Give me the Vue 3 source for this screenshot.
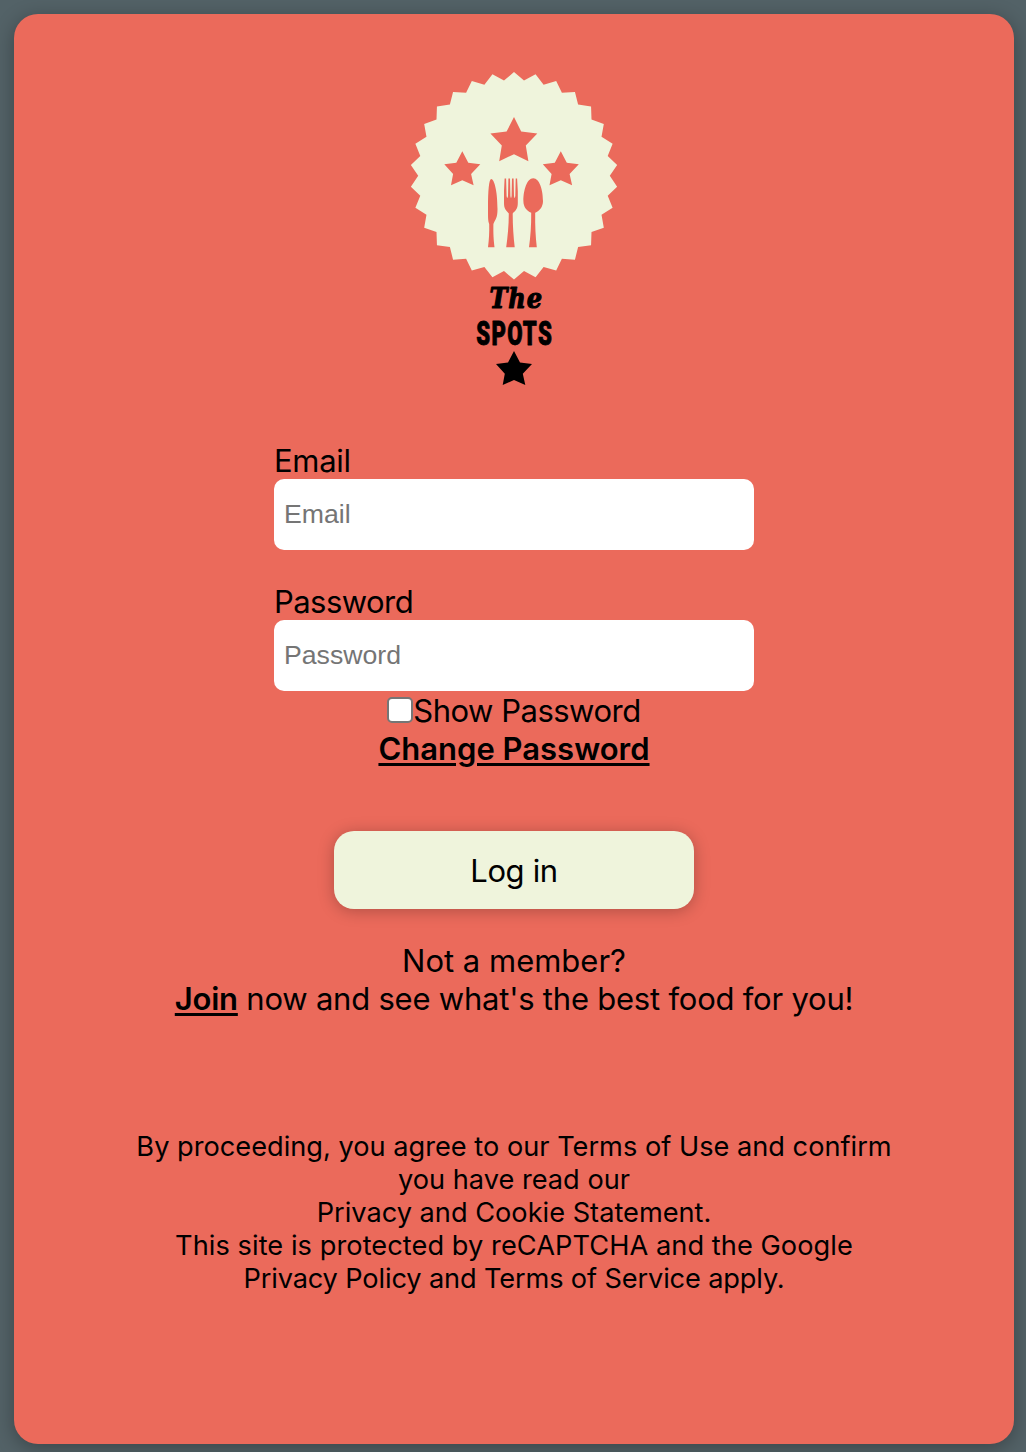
<script setup>
import { ref } from 'vue'

const email = ref('')
const password = ref('')
const showPassword = ref(false)

// 30-tooth badge outline
const badge = Array.from({ length: 60 }, (_, i) => {
  const r = i % 2 ? 95.8 : 103.7
  const a = (i * 6 - 90) * Math.PI / 180
  return `${(104 + r * Math.cos(a)).toFixed(2)},${(103.8 + r * Math.sin(a)).toFixed(2)}`
}).join(' ')
</script>

<template>
  <div class="page">
    <main class="card">
      <svg class="logo" width="208" height="316" viewBox="0 0 208 316" role="img" aria-label="The Spots">
        <defs>
          <path id="star" d="M0 0 6 11.5 18 13 8.8 22.8 11.3 34 0 29 -11.3 34 -9.2 22.8 -18 13 -6 11.5Z" />
        </defs>
        <polygon class="cream" :points="badge" />
        <g class="coral">
          <path d="M104 45 111.2 59.6 127.3 61.5 115.8 73.4 118.4 89.2 104 82.2 89.2 89.2 91.8 73.4 80.4 61.5 96.6 59.6Z" />
          <use href="#star" x="52.3" y="79.3" />
          <use href="#star" x="150.8" y="79.3" />
          <path d="M81.3 107C84 107 87.5 118 87.5 137C87.5 146 85.5 147 83.4 152C83.2 162 83.6 167 84.5 175.2H78C79 167 79.4 161 79.2 152C78 149 78 146 78 137C78 118 79 107 81.3 107Z" />
          <path d="M94.6 106.4H96.1L96.6 124Q97.2 128 98 124L98.4 106.4H100L100.4 124Q101 128 101.6 124L102 106.4H103.6L104 124Q104.6 128 105.3 124L105.7 106.4H107.1L107.8 119V131C107.8 137 105.5 138.5 102.7 141.4C102.7 154 103.5 165 104.7 175.2H96.2C97.6 165 98.8 154 98.8 141.4C96 138 94 137 94 131V119Z" />
          <path d="M123.2 106.2C129.5 106.2 133 118 133 129C133 135 129.5 139 125.2 140.8C125 154 125.6 165 126.8 175.2H119C120.5 165 121.3 154 121.2 140.8C116.8 139 113.4 135 113.4 129C113.4 118 117 106.2 123.2 106.2Z" />
        </g>
        <text class="script" x="79.5" y="235.6" textLength="53.5" lengthAdjust="spacingAndGlyphs">The</text>
        <text class="block" x="66.2" y="272.6" textLength="77" lengthAdjust="spacingAndGlyphs">SPOTS</text>
        <use href="#star" x="104" y="279" />
      </svg>

      <form class="form" @submit.prevent>
        <div class="field">
          <label class="l-email" for="email">Email</label>
          <input id="email" v-model="email" type="email" placeholder="Email">
        </div>
        <div class="field">
          <label class="l-pass" for="password">Password</label>
          <input id="password" v-model="password" :type="showPassword ? 'text' : 'password'" placeholder="Password">
        </div>
        <label class="show"><input v-model="showPassword" type="checkbox"><span>Show Password</span></label>
        <a class="change">Change Password</a>
        <button type="submit">Log in</button>
      </form>

      <p class="join"><span>Not a member?</span><span class="invite"><a>Join</a> now and see what's the best food for you!</span></p>
      <p class="legal">
        <span>By proceeding, you agree to our Terms of Use and confirm</span>
        <span>you have read our</span>
        <span>Privacy and Cookie Statement.</span>
        <span class="captcha">This site is protected by reCAPTCHA and the Google</span>
        <span class="policy">Privacy Policy and Terms of Service apply.</span>
      </p>
    </main>
  </div>
</template>

<style>
body { background: #536267; }
</style>

<style scoped>
* { box-sizing: border-box; }
.page {
  height: 1452px;
  padding: 14px 12px 8px 14px;
  overflow: hidden;
  background: #536267;
  color: #000;
  font: 31px/38px Inter, sans-serif;
}
.card {
  display: flex;
  flex-direction: column;
  align-items: center;
  height: 1430px;
  padding-top: 58px;
  border-radius: 24px;
  background: #eb6a5b;
  box-shadow: 0 4px 20px rgba(0, 0, 0, .3);
}
.logo { display: block; }
.cream { fill: #eff4dc; }
.coral { fill: #eb6a5b; }
.script {
  font: italic 700 27px "DejaVu Serif", serif;
  letter-spacing: 1px;
  stroke: #000;
  stroke-width: 1.1px;
  stroke-linejoin: round;
}
.block {
  font: 900 34px Roboto, sans-serif;
  letter-spacing: 2px;
  stroke: #000;
  stroke-width: .9px;
  stroke-linejoin: round;
}
.form {
  display: flex;
  flex-direction: column;
  align-items: center;
  margin-top: 53px;
}
.field {
  display: flex;
  flex-direction: column;
  align-items: flex-start;
  width: 480px;
}
.field + .field { margin-top: 32px; }
.field label { height: 38px; padding-top: 1px; }
.l-email { letter-spacing: -.3px; }
.l-pass { letter-spacing: -.55px; }
.field input {
  width: 480px;
  height: 71px;
  padding: 0 10px;
  border: 0;
  border-radius: 10px;
  background: #fff;
  font: 26.67px "Liberation Sans", Arial, sans-serif;
}
.field input::placeholder { color: #757575; opacity: 1; }
.show { display: flex; align-items: flex-start; height: 39px; padding-top: 1px; letter-spacing: -.5px; }
.show input {
  appearance: none;
  width: 26px;
  height: 26px;
  margin: 5px 0 0;
  border: 2px solid #767676;
  border-radius: 5px;
  background: #fff;
}
.change, .join a {
  font-weight: 600;
  text-decoration: underline;
  text-decoration-thickness: 3px;
  text-underline-offset: 3px;
}
button {
  width: 360px;
  height: 78px;
  margin-top: 63px;
  padding: 2px 0 0;
  border: 0;
  border-radius: 20px;
  background: #eff4dc;
  color: #000;
  font: 31px/38px Inter, sans-serif;
  letter-spacing: -.35px;
  box-shadow: 0 2px 16px rgba(0, 0, 0, .25);
}
p { display: flex; flex-direction: column; align-items: center; margin: 0; white-space: nowrap; }
.join { margin-top: 33px; }
.invite { letter-spacing: -.22px; }
.legal { margin-top: 112px; font-size: 27.2px; line-height: 33px; }
.captcha { letter-spacing: .06px; }
.policy { letter-spacing: -.14px; }
</style>
